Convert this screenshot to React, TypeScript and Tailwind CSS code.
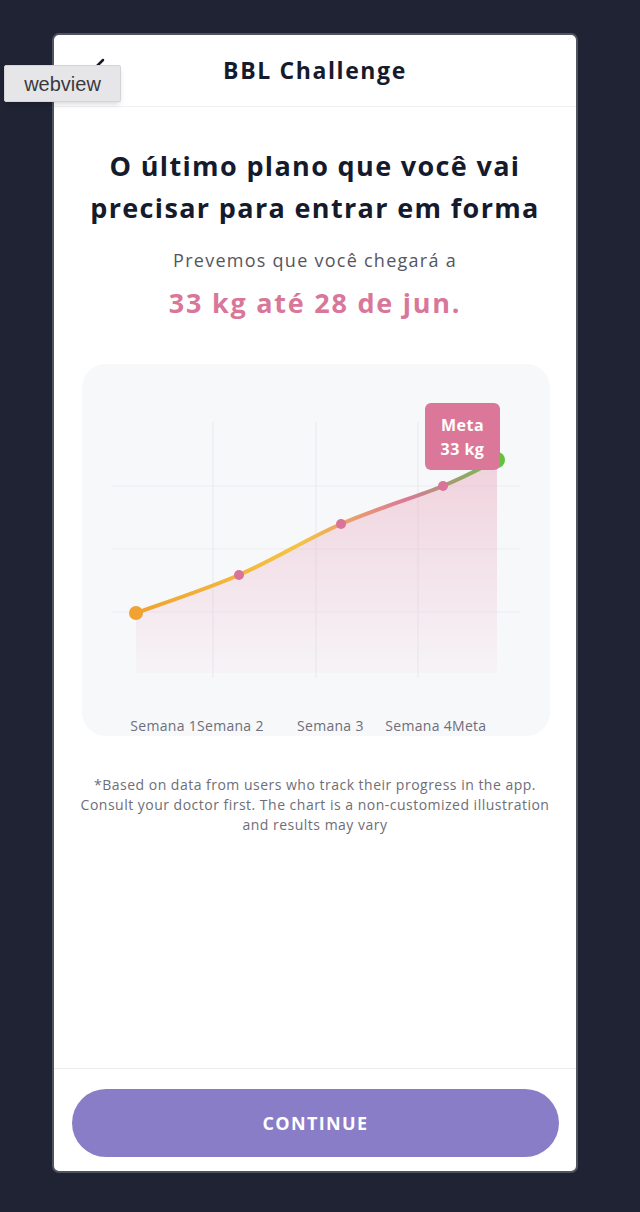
import React from "react";

const font = { fontFamily: '"Open Sans", "Noto Sans", sans-serif' };

// x in chart coords, anchor decides which edge sits on x
const labels: { text: string; x: number; anchor: "start" | "end" }[] = [
    { text: "Semana 1", x: 115, anchor: "end" },
    { text: "Semana 2", x: 115, anchor: "start" },
    { text: "Semana 3", x: 215, anchor: "start" },
    { text: "Semana 4", x: 370, anchor: "end" },
    { text: "Meta", x: 370, anchor: "start" },
];

const points = [
    { x: 157, y: 211 },
    { x: 259, y: 160 },
    { x: 361, y: 122 },
];

const curve =
    "M54,249 C71.2,242.7 122.8,225.8 157,211 C191.2,196.2 225,174.8 259,160 C293,145.2 335,132.7 361,122 C387,111.3 406,100.3 415,96";

const Chart = () => (
    <div className="relative mx-[28px] h-[372px] w-[468px] rounded-[24px] bg-[#f7f8fa]">
        <svg width="468" height="372" viewBox="0 0 468 372" className="block">
            <defs>
                <linearGradient id="line" x1="54" y1="0" x2="415" y2="0" gradientUnits="userSpaceOnUse">
                    <stop offset="0" stopColor="#f0a232" />
                    <stop offset="0.45" stopColor="#f4c444" />
                    <stop offset="0.75" stopColor="#dc7898" />
                    <stop offset="1" stopColor="#6cc04a" />
                </linearGradient>
                <linearGradient id="area" x1="0" y1="96" x2="0" y2="309" gradientUnits="userSpaceOnUse">
                    <stop offset="0" stopColor="#e7a2b8" stopOpacity="0.45" />
                    <stop offset="1" stopColor="#e7a2b8" stopOpacity="0.05" />
                </linearGradient>
            </defs>
            {[131, 234, 336].map((x) => (
                <line key={x} x1={x} y1={58} x2={x} y2={314} stroke="#e8e9ee" strokeWidth={1} />
            ))}
            {[122, 185, 248].map((y) => (
                <line key={y} x1={30} y1={y} x2={438} y2={y} stroke="#ecedf1" strokeWidth={1} />
            ))}
            <path d={curve + " L415,309 L54,309 Z"} fill="url(#area)" />
            <path d={curve} fill="none" stroke="url(#line)" strokeWidth={4} strokeLinecap="round" />
            <circle cx={54} cy={249} r={7} fill="#f0a232" />
            {points.map((p) => (
                <circle key={p.x} cx={p.x} cy={p.y} r={5} fill="#da7399" />
            ))}
            <circle cx={415} cy={96} r={8} fill="#62c23e" />
            {labels.map((l) => (
                <text
                    key={l.text}
                    x={l.x}
                    y={367}
                    fontSize={14}
                    fill="#6e6e7a"
                    textAnchor={l.anchor}
                    letterSpacing="0.3"
                    style={font}
                >
                    {l.text}
                </text>
            ))}
        </svg>
        {/* goal tooltip */}
        <div className="absolute left-[343px] top-[39px] flex h-[67px] w-[75px] flex-col items-center justify-center rounded-[6px] bg-[#db7799] text-[16px] font-bold leading-[24px] tracking-[0.03em] text-white">
            <span>Meta</span>
            <span>33 kg</span>
        </div>
    </div>
);

export default function App() {
    return (
        <div className="relative min-h-screen bg-[#1f2333] pl-[52px] pt-[33px]" style={font}>
            <div className="flex h-[1140px] w-[526px] flex-col overflow-hidden rounded-[7px] border-2 border-[#50545f] bg-white">
                <header className="relative flex h-[72px] shrink-0 items-center justify-center border-b border-[#f0f0f2]">
                    <svg className="absolute left-[34px] top-[20px] h-6 w-6" viewBox="0 0 24 24" fill="none" stroke="#151b2c" strokeWidth={2.5} strokeLinecap="round" strokeLinejoin="round">
                        <path d="M15 5l-7 7 7 7" />
                    </svg>
                    <h1 className="text-[23px] font-bold tracking-[0.07em] text-[#151b2c]">BBL Challenge</h1>
                </header>

                <main className="flex flex-1 flex-col items-center pt-[38px]">
                    <h2 className="text-center text-[27px] font-bold leading-[42px] tracking-[0.05em] text-[#151b2c]">
                        O último plano que você vai
                        <br />
                        precisar para entrar em forma
                    </h2>
                    <p className="mt-[18px] text-[18px] leading-[26px] tracking-[0.07em] text-[#55555f]">Prevemos que você chegará a</p>
                    <p className="mt-[12px] text-[27px] font-bold leading-[36px] tracking-[0.065em] text-[#d9779a]">33 kg até 28 de jun.</p>
                    <div className="mt-[43px] self-start">
                        <Chart />
                    </div>
                    <p className="mt-[39px] px-[20px] text-center text-[14px] leading-[20px] tracking-[0.035em] text-[#6e6e78]">
                        *Based on data from users who track their progress in the app.
                        <br />
                        Consult your doctor first. The chart is a non-customized illustration
                        <br />
                        and results may vary
                    </p>
                </main>

                <footer className="shrink-0 border-t border-[#ececef] px-[18px] pb-[14px] pt-[20px]">
                    <button className="flex h-[68px] w-[487px] items-center justify-center rounded-full bg-[#897dc8] text-[18px] font-bold tracking-[0.075em] text-white">
                        CONTINUE
                    </button>
                </footer>
            </div>

            {/* devtools webview tag */}
            <div className="absolute left-[4px] top-[65px] flex h-[37px] w-[117px] items-center justify-center rounded-[2px] border border-[#d4d4d8] bg-[#e6e6e8] text-[20px] text-[#3a3a3e] shadow-md" style={{ fontFamily: '"Liberation Sans", sans-serif' }}>
                webview
            </div>
        </div>
    );
}
